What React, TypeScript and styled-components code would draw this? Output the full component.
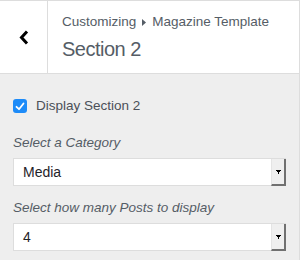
import React from "react";
import styled, { createGlobalStyle } from "styled-components";

const Global = createGlobalStyle`
  html, body { margin: 0; padding: 0; background: #eeeeee; }
  body { font-family: "Liberation Sans", Arial, sans-serif; }
  * { box-sizing: border-box; }
`;

const Panel = styled.div`
  width: 300px;
  height: 260px;
  background: #eeeeee;
  border-right: 1px solid #dddddd;
  overflow: hidden;
`;

const Header = styled.div`
  display: flex;
  height: 74px;
  background: #ffffff;
  border-top: 1px solid #dddddd;
  border-bottom: 1px solid #dddddd;
`;

const BackButton = styled.button`
  width: 48px;
  flex: none;
  display: flex;
  align-items: center;
  justify-content: center;
  padding: 0 0 0 0;
  background: transparent;
  border: none;
  border-right: 1px solid #dddddd;
  cursor: pointer;
`;

const TitleBlock = styled.div`
  padding: 9px 0 0 14px;
  display: flex;
  flex-direction: column;
`;

const Crumb = styled.div`
  display: flex;
  align-items: center;
  font-size: 13.5px;
  line-height: 24px;
  color: #555d66;
  white-space: nowrap;
`;

const CrumbSep = styled.svg`
  margin: 0 6px;
`;

const Title = styled.h3`
  margin: 2px 0 0;
  font-size: 20px;
  line-height: 26px;
  font-weight: 400;
  letter-spacing: -0.5px;
  color: #555d66;
`;

const Body = styled.div`
  padding: 23px 13px 0;
  display: flex;
  flex-direction: column;
`;

const CheckRow = styled.label`
  display: flex;
  align-items: center;
  gap: 9px;
  font-size: 13.5px;
  line-height: 18px;
  color: #4b5058;
  margin-bottom: 19px;
`;

const CheckBox = styled.span`
  width: 14px;
  height: 14px;
  border-radius: 3px;
  background: #1d8bf8;
  display: flex;
  align-items: center;
  justify-content: center;
`;

const FieldLabel = styled.div`
  font-size: 13.5px;
  line-height: 18px;
  font-style: italic;
  color: #555d66;
  margin-bottom: 6px;
`;

const Select = styled.div<{ $last?: boolean }>`
  display: flex;
  height: 28px;
  background: #ffffff;
  border: 1px solid #dddddd;
  border-right: none;
  margin-bottom: ${(p) => (p.$last ? "0" : "13px")};
`;

const SelectValue = styled.div`
  flex: 1;
  padding-left: 9px;
  font-size: 14px;
  line-height: 26px;
  color: #1f2328;
`;

const ArrowButton = styled.div`
  width: 15px;
  flex: none;
  margin-bottom: -1px;
  background: #efefef;
  border-left: 1px solid #e4e4e4;
  border-right: 2px solid #707070;
  border-bottom: 2px solid #707070;
  display: flex;
  align-items: center;
  justify-content: center;
  padding-top: 1px;
`;

const Arrow = () => (
  <svg width="5" height="4" viewBox="0 0 5 4" shapeRendering="crispEdges">
    <path d="M0 0h5v1H0zM1 1h3v1H1zM2 2h1v2H2z" fill="#000" />
  </svg>
);

const Dropdown: React.FC<{ value: string; last?: boolean }> = ({ value, last }) => (
  <Select $last={last}>
    <SelectValue>{value}</SelectValue>
    <ArrowButton>
      <Arrow />
    </ArrowButton>
  </Select>
);

export default function App() {
  return (
    <>
      <Global />
      <Panel>
        <Header>
          <BackButton aria-label="Back">
            <svg width="10" height="15" viewBox="0 0 10 15">
              <polyline
                points="8,1.5 2.5,7.5 8,13.5"
                fill="none"
                stroke="#000"
                strokeWidth="3"
              />
            </svg>
          </BackButton>
          <TitleBlock>
            <Crumb>
              Customizing
              <CrumbSep width="4" height="7" viewBox="0 0 4 7">
                <path d="M0 0L4 3.5L0 7z" fill="#555d66" />
              </CrumbSep>
              Magazine Template
            </Crumb>
            <Title>Section 2</Title>
          </TitleBlock>
        </Header>
        <Body>
          <CheckRow>
            <CheckBox>
              <svg width="10" height="9" viewBox="0 0 10 9">
                <polyline
                  points="1.5,4.8 4,7.2 8.5,1.5"
                  fill="none"
                  stroke="#fff"
                  strokeWidth="1.8"
                  strokeLinecap="round"
                  strokeLinejoin="round"
                />
              </svg>
            </CheckBox>
            Display Section 2
          </CheckRow>
          <FieldLabel>Select a Category</FieldLabel>
          <Dropdown value="Media" />
          <FieldLabel>Select how many Posts to display</FieldLabel>
          <Dropdown value="4" last />
        </Body>
      </Panel>
    </>
  );
}
